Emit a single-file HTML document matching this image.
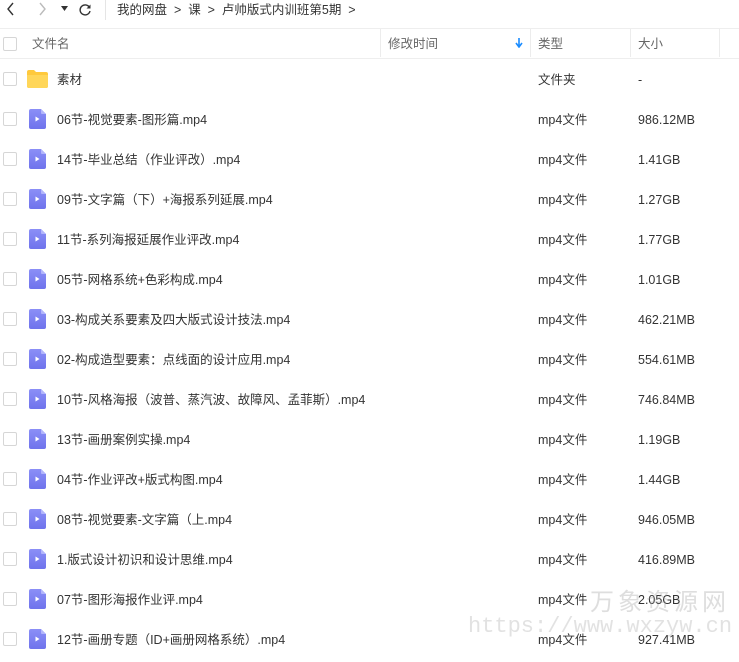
<!DOCTYPE html>
<html><head><meta charset="utf-8"><style>
body{margin:0;width:739px;height:662px;background:#fff;position:relative;overflow:hidden;font-family:"Liberation Sans","Noto Sans CJK SC",sans-serif;font-size:12.5px;color:#333}
.a{position:absolute;white-space:nowrap;line-height:16px;height:16px}
.cb{position:absolute;left:3px;width:12px;height:12px;border:1px solid #d6d6d6;border-radius:2px;background:#fff}
.vi{position:absolute;left:29px;width:17px;height:20px}
.sep{position:absolute;top:29px;height:28px;width:1px;background:#ececec}
</style></head><body>
<svg style="position:absolute;left:6px;top:2px" width="10" height="14" viewBox="0 0 10 14"><path d="M7 1L2 7l5 6" fill="none" stroke="#333" stroke-width="1.4"/></svg>
<svg style="position:absolute;left:37px;top:2px" width="10" height="14" viewBox="0 0 10 14"><path d="M3 1l5 6-5 6" fill="none" stroke="#bbb" stroke-width="1.4"/></svg>
<svg style="position:absolute;left:61px;top:6px" width="7" height="5" viewBox="0 0 7 5"><path d="M0 0h7L3.5 5z" fill="#333"/></svg>
<svg style="position:absolute;left:79px;top:3px" width="13" height="13" viewBox="0 0 13 13"><path d="M10.5 4.5A5 5 0 1 0 11 8" fill="none" stroke="#333" stroke-width="1.4"/><path d="M11.5 1.5v4h-4z" fill="#333"/></svg>
<div style="position:absolute;left:105px;top:0;width:1px;height:20px;background:#e5e5e5"></div>
<div class="a" style="left:117px;top:2px;font-size:12.5px">我的网盘 &nbsp;&gt;&nbsp; 课 &nbsp;&gt;&nbsp; 卢帅版式内训班第5期 &nbsp;&gt;</div>
<div style="position:absolute;left:0;top:28px;width:739px;height:1px;background:#eee"></div>
<div style="position:absolute;left:0;top:58px;width:739px;height:1px;background:#eee"></div>
<div class="cb" style="top:37px"></div>
<div class="a" style="left:32px;top:36px;color:#666">文件名</div>
<div class="sep" style="left:380px"></div>
<div class="a" style="left:388px;top:36px;color:#666">修改时间</div>
<svg style="position:absolute;left:515px;top:38px" width="8" height="10" viewBox="0 0 8 10"><path d="M4 0v8M1 5l3 4 3-4" fill="none" stroke="#1a8cff" stroke-width="1.6"/></svg>
<div class="sep" style="left:530px"></div>
<div class="a" style="left:538px;top:36px;color:#666">类型</div>
<div class="sep" style="left:630px"></div>
<div class="a" style="left:638px;top:36px;color:#666">大小</div>
<div class="sep" style="left:719px"></div>
<div id="rows"></div>
<div class="cb" style="top:72px"></div>
<svg style="position:absolute;left:27px;top:70px" width="21" height="18" viewBox="0 0 21 18"><path d="M0 2a2 2 0 0 1 2-2h5l2 2h10a2 2 0 0 1 2 2v12a2 2 0 0 1-2 2H2a2 2 0 0 1-2-2z" fill="#ffc93c"/><path d="M0 5h21v11a2 2 0 0 1-2 2H2a2 2 0 0 1-2-2z" fill="#ffd659"/></svg>
<div class="a" style="left:57px;top:72px">素材</div>
<div class="a" style="left:538px;top:72px">文件夹</div>
<div class="a" style="left:638px;top:72px">-</div>
<script>
var d=[["06节-视觉要素-图形篇.mp4","986.12MB"],["14节-毕业总结（作业评改）.mp4","1.41GB"],["09节-文字篇（下）+海报系列延展.mp4","1.27GB"],["11节-系列海报延展作业评改.mp4","1.77GB"],["05节-网格系统+色彩构成.mp4","1.01GB"],["03-构成关系要素及四大版式设计技法.mp4","462.21MB"],["02-构成造型要素：点线面的设计应用.mp4","554.61MB"],["10节-风格海报（波普、蒸汽波、故障风、孟菲斯）.mp4","746.84MB"],["13节-画册案例实操.mp4","1.19GB"],["04节-作业评改+版式构图.mp4","1.44GB"],["08节-视觉要素-文字篇（上.mp4","946.05MB"],["1.版式设计初识和设计思维.mp4","416.89MB"],["07节-图形海报作业评.mp4","2.05GB"],["12节-画册专题（ID+画册网格系统）.mp4","927.41MB"]];
var h="";d.forEach(function(r,i){var c=119+40*i;
h+='<div class="cb" style="top:'+(c-7)+'px"></div>';
h+='<svg class="vi" style="top:'+(c-10)+'px" viewBox="0 0 17 20"><defs><linearGradient id="g'+i+'" x1="0" y1="0" x2="0" y2="1"><stop offset="0" stop-color="#8b8ff7"/><stop offset="1" stop-color="#6f73ec"/></linearGradient></defs><path d="M2 0h10l5 5v13a2 2 0 0 1-2 2H2a2 2 0 0 1-2-2V2a2 2 0 0 1 2-2z" fill="url(#g'+i+')"/><path d="M12 0v4a1 1 0 0 0 1 1h4z" fill="#b3b6fb"/><path d="M6.5 7.5v5l4-2.5z" fill="#fff"/></svg>';
h+='<div class="a" style="left:57px;top:'+(c-7)+'px">'+r[0]+'</div>';
h+='<div class="a" style="left:538px;top:'+(c-7)+'px">mp4文件</div>';
h+='<div class="a" style="left:638px;top:'+(c-7)+'px">'+r[1]+'</div>';});
document.getElementById("rows").innerHTML=h;
</script>
<div style="position:absolute;white-space:nowrap;left:590px;top:586px;font-size:24px;line-height:28px;color:rgba(160,160,160,0.35);letter-spacing:4px;font-family:'Noto Sans CJK SC',sans-serif">万象资源网</div>
<div style="position:absolute;white-space:nowrap;left:468px;top:614px;font-size:22px;line-height:26px;font-family:'Liberation Mono',monospace;color:rgba(160,160,160,0.3)">https://www.wxzyw.cn</div>
</body></html>
